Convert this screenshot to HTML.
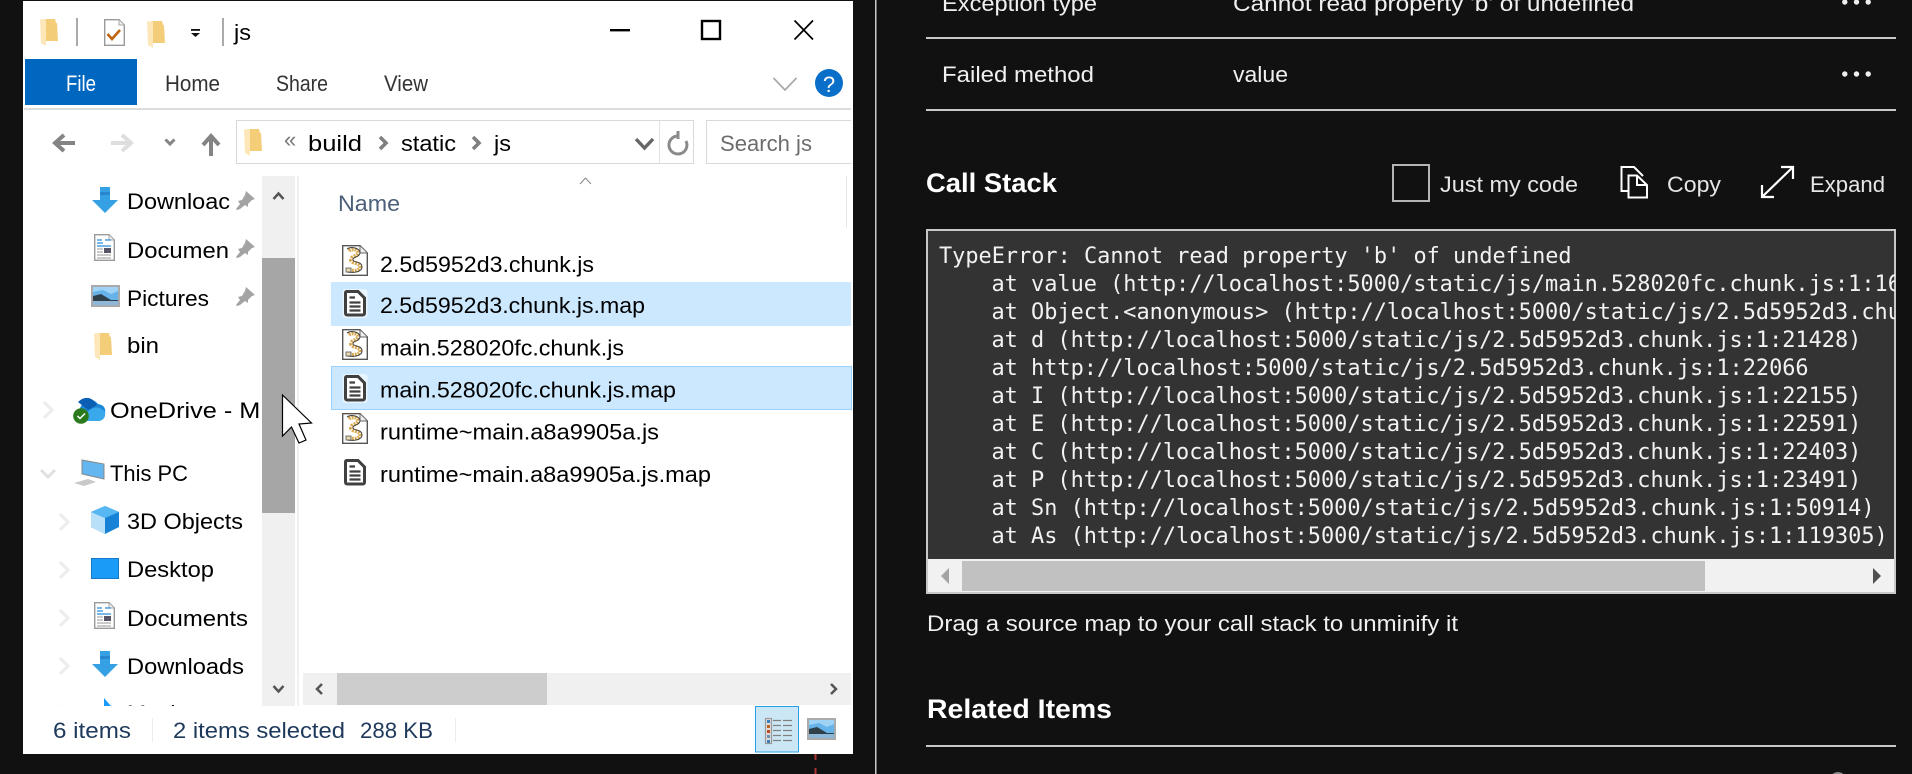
<!DOCTYPE html>
<html><head><meta charset="utf-8"><style>
html,body{margin:0;padding:0;background:#111;width:1912px;height:774px;overflow:hidden}
svg{display:block}
text{font-family:"Liberation Sans",sans-serif;font-size:22px}
.k{fill:#000}.w{fill:#f0f0f0}
.m{font-family:"DejaVu Sans Mono","Liberation Mono",monospace;font-size:21.9px;fill:#f2f2f2}
.b{font-weight:bold;font-size:27px;fill:#fff}
</style></head><body>
<svg width="1912" height="774" viewBox="0 0 1912 774" xmlns="http://www.w3.org/2000/svg">
<defs>
<g id="folder"><path d="M5 1H15L16 5H17L18 23H6Z" fill="#f4cd79"/><path d="M0 1.500L6 1V23L6 28L1 25Z" fill="#fde7b8"/></g>
<g id="doc"><path d="M.7.700H15L20.300 6V26.300H.7Z" fill="#fff" stroke="#9a9a9a" stroke-width="1.400"/><path d="M15 1V6H20" fill="#eee" stroke="#aaa"/><path d="M3 6H8M3 9H9M11 6H17M3 12H17" stroke="#2a8ad8" stroke-width="1.200"/><rect x="10" y="14" width="7" height="5" fill="#556"/><path d="M3 15H9M3 18H9M3 21H17M3 24H17" stroke="#aaa" stroke-width="1.200"/></g>
<g id="dl"><path d="M8 0H18V13H26L13 26L0 13H8Z" fill="#35a0e4"/><path d="M8 5H18V8H8Z" fill="#2a86cc"/></g>
<g id="pin"><path d="M11 1L20 9L17 10L13 14L13 17L10 15L5 19L2 20L1 19L5 14L3 11L7 10L10 5Z" fill="#a3a3a3"/></g>
<g id="js"><path d="M.7.700H18L25.300 8V30.300H.7Z" fill="#fff" stroke="#555" stroke-width="1.400"/><path d="M18 1V8H25" fill="#eee" stroke="#666"/><path d="M7 6C10 3 16 4 16 8C15 12 9 11 9 15C10 19 18 17 18 22C18 26 12 26 7 26" fill="none" stroke="#d8a850" stroke-width="4" stroke-dasharray="2 1"/><path d="M5 4C9 1 18 3 18 8C17 13 11 11 11 15C12 18 20 16 20 22C20 27 12 28 5 27" fill="none" stroke="#444" stroke-width="1"/><rect x="4" y="23" width="5" height="4" fill="#e8d9b0" stroke="#555" stroke-width=".8"/></g>
<g id="map"><rect x="-1.500" y="-1" width="25" height="29" rx="3" fill="#fff" opacity=".55"/><path d="M2 1.500H14L20.500 8V23C20.500 24.500 20 25 18.500 25H3.500C2 25 1.500 24.500 1.500 23V3C1.500 1.500 2 1.500 3 1.500Z" fill="#fff" stroke="#404040" stroke-width="3"/><path d="M5.500 7.500H11M5.500 12.500H16.500M5.500 16.500H16.500M5.500 20.500H16.500" stroke="#404040" stroke-width="2.200"/></g>
<g id="sun"><rect x="1" y="1" width="27" height="20" fill="#66b3ea" stroke="#aaa" stroke-width="2"/><path d="M2 7L12 5L20 9L27 6V2H2Z" fill="#9ed3f5"/><path d="M2 11L10 9L20 15H27V17H2Z" fill="#30404a"/><path d="M2 16H27V20H2Z" fill="#8fb8d8"/></g>
<g id="ell"><circle cx="2.800" cy="0" r="2.700" fill="#eee"/><circle cx="14.500" cy="0" r="2.700" fill="#eee"/><circle cx="26.200" cy="0" r="2.700" fill="#eee"/></g>
<clipPath id="codeclip"><rect x="928" y="231" width="967" height="328"/></clipPath>
<clipPath id="navclip"><rect x="23" y="176" width="239" height="530"/></clipPath>
</defs>

<rect width="1912" height="774" fill="#111"/>
<path d="M815.500 754V760M815.500 768V774" stroke="#a33" stroke-width="2"/>
<rect x="23" y="1" width="830" height="753" fill="#fff"/>

<!-- Title bar -->
<use href="#folder" x="40" y="18"/>
<rect x="76" y="18" width="2" height="28" fill="#aaa"/>
<path d="M104.700 19.700H119L124.300 25V45.300H104.700Z" fill="#fff" stroke="#9a9a9a" stroke-width="1.400"/>
<path d="M119 20V25H124" fill="#eee" stroke="#aaa"/>
<path d="M107.500 34L112 39L120 30" fill="none" stroke="#bf6510" stroke-width="2.600"/>
<use href="#folder" x="147" y="20"/>
<rect x="191" y="29" width="9" height="1.800" fill="#111"/><path d="M191 33H200L195.500 37Z" fill="#111"/>
<rect x="222" y="18" width="2" height="28" fill="#aaa"/>
<text x="234" y="40" textLength="17" lengthAdjust="spacingAndGlyphs" class="k" font-size="23">js</text>
<rect x="610" y="29" width="20" height="2.400" fill="#000"/>
<rect x="702" y="21" width="18" height="18" fill="none" stroke="#000" stroke-width="2.400"/>
<path d="M794.500 20.500L813 39.500M813 20.500L794.500 39.500" stroke="#000" stroke-width="1.700"/>

<!-- Ribbon -->
<rect x="25" y="59" width="112" height="46" fill="#0067c0"/>
<text x="66" y="91" textLength="30" lengthAdjust="spacingAndGlyphs" fill="#fff">File</text>
<text x="165" y="91" textLength="55" lengthAdjust="spacingAndGlyphs" fill="#333">Home</text>
<text x="276" y="91" textLength="52" lengthAdjust="spacingAndGlyphs" fill="#333">Share</text>
<text x="384" y="91" textLength="44" lengthAdjust="spacingAndGlyphs" fill="#333">View</text>
<path d="M773.500 78L785 90L796.500 78" fill="none" stroke="#aaa" stroke-width="1.800"/>
<circle cx="829" cy="83" r="14" fill="#0a6fc9"/>
<text x="829" y="92" text-anchor="middle" fill="#fff" font-size="24">?</text>
<rect x="24" y="108" width="827" height="2" fill="#dcdcdc"/>

<!-- Nav bar -->
<path d="M75 143H56M64 135L55 143L64 151" fill="none" stroke="#848484" stroke-width="4"/>
<path d="M111 143H130M122 135L131 143L122 151" fill="none" stroke="#dedede" stroke-width="4"/>
<path d="M165.500 139.500L170 144L174.500 139.500" fill="none" stroke="#848484" stroke-width="3"/>
<path d="M211 156V137M203 145L211 136L219 145" fill="none" stroke="#848484" stroke-width="4"/>
<rect x="236.500" y="120.500" width="457" height="43" fill="#fff" stroke="#d9d9d9"/>
<use href="#folder" x="244" y="128"/>
<text x="284" y="147" fill="#777" font-size="15">«</text>
<text x="308" y="151" textLength="54" lengthAdjust="spacingAndGlyphs" class="k">build</text>
<path d="M380 137L386 143L380 149" fill="none" stroke="#808080" stroke-width="3.600"/>
<text x="401" y="151" textLength="55" lengthAdjust="spacingAndGlyphs" class="k">static</text>
<path d="M473 137L479 143L473 149" fill="none" stroke="#808080" stroke-width="3.600"/>
<text x="494" y="151" textLength="17" lengthAdjust="spacingAndGlyphs" class="k">js</text>
<path d="M636 139L644.500 148L653 139" fill="none" stroke="#666" stroke-width="3.400"/>
<rect x="659" y="121" width="1" height="42" fill="#e2e2e2"/>
<path d="M678 136A9 9 0 1 0 686 141M678 131V139" fill="none" stroke="#8a8a8a" stroke-width="3"/>
<path d="M851 120.500H706.500V163.500H851" fill="#fff" stroke="#d9d9d9"/>
<text x="720" y="151" textLength="92" lengthAdjust="spacingAndGlyphs" fill="#6d6d6d">Search js</text>

<!-- Left nav -->
<g clip-path="url(#navclip)">
<use href="#dl" x="92" y="187"/>
<text x="127" y="209" textLength="103" lengthAdjust="spacingAndGlyphs" class="k">Downloac</text>
<use href="#pin" x="235" y="190"/>
<use href="#doc" x="94" y="234"/>
<text x="127" y="258" textLength="102" lengthAdjust="spacingAndGlyphs" class="k">Documen</text>
<use href="#pin" x="235" y="238"/>
<use href="#sun" x="91" y="285"/>
<text x="127" y="306" textLength="82" lengthAdjust="spacingAndGlyphs" class="k">Pictures</text>
<use href="#pin" x="235" y="286"/>
<use href="#folder" x="94" y="332"/>
<text x="127" y="353" textLength="32" lengthAdjust="spacingAndGlyphs" class="k">bin</text>
<path d="M44 402L52 410L44 418" fill="none" stroke="#ececec" stroke-width="3"/>
<path d="M79 413C79 404 90 394 98 404C104 405 106 408 105 414C105 420 100 421 97 421H82Z" fill="#1e88d8"/>
<path d="M78 402C84 396 92 396 97 405L88 410Z" fill="#0a5eb4"/>
<path d="M84 416C90 408 98 404 105 412C106 418 102 421 98 421H84Z" fill="#3aa9ec"/>
<circle cx="81" cy="416" r="7.800" fill="#2b7a1d"/>
<path d="M77.500 416L80 418.500L85 413.500" fill="none" stroke="#fff" stroke-width="1.500"/>
<text x="110" y="418" textLength="156" lengthAdjust="spacingAndGlyphs" class="k">OneDrive - Mi</text>
<path d="M41 470L48 477L55 470" fill="none" stroke="#e0e0e0" stroke-width="3"/>
<path d="M82 460L104 464V479L82 474Z" fill="#63b6ef" stroke="#888" stroke-width="1"/>
<path d="M74 483L88 479L96 482L84 486Z" fill="#c8c8c8"/>
<text x="110" y="481" textLength="78" lengthAdjust="spacingAndGlyphs" class="k">This PC</text>
<path d="M60 514L68 522L60 530" fill="none" stroke="#ececec" stroke-width="3"/>
<path d="M105 506L119 512V527L105 534L91 527V512Z" fill="#1782d6"/>
<path d="M91 512L105 506L119 512L105 518Z" fill="#57b7f2"/>
<path d="M91 512L105 518V534L91 527Z" fill="#b8e0f8"/>
<text x="127" y="529" textLength="116" lengthAdjust="spacingAndGlyphs" class="k">3D Objects</text>
<path d="M60 562L68 570L60 578" fill="none" stroke="#ececec" stroke-width="3"/>
<rect x="91.500" y="558.500" width="27" height="20" fill="#1a9bf5" stroke="#1477c8"/>
<text x="127" y="577" textLength="87" lengthAdjust="spacingAndGlyphs" class="k">Desktop</text>
<path d="M60 610L68 618L60 626" fill="none" stroke="#ececec" stroke-width="3"/>
<use href="#doc" x="94" y="602"/>
<text x="127" y="626" textLength="121" lengthAdjust="spacingAndGlyphs" class="k">Documents</text>
<path d="M60 658L68 666L60 674" fill="none" stroke="#ececec" stroke-width="3"/>
<use href="#dl" x="92" y="651"/>
<text x="127" y="674" textLength="117" lengthAdjust="spacingAndGlyphs" class="k">Downloads</text>
<path d="M60 706L68 714" fill="none" stroke="#ececec" stroke-width="3"/>
<path d="M104 698L111 706H104Z" fill="#1a9bf5"/>
<text x="127" y="721" textLength="60" lengthAdjust="spacingAndGlyphs" class="k">Music</text>
</g>

<!-- Nav scrollbar -->
<rect x="262" y="176" width="33" height="530" fill="#f0f0f0"/>
<rect x="262" y="258" width="33" height="255" fill="#a6a6a6"/>
<rect x="297" y="176" width="2" height="530" fill="#f0f0f0"/>
<path d="M273.500 199L278.500 193.500L283.500 199" fill="none" stroke="#555" stroke-width="2.500"/>
<path d="M273.500 686L278.500 691.500L283.500 686" fill="none" stroke="#555" stroke-width="2.500"/>

<!-- File list -->
<path d="M580 184L585.500 178L591 184" fill="none" stroke="#888" stroke-width="1"/>
<rect x="846" y="176" width="1" height="52" fill="#e8e8e8"/>
<text x="338" y="211" textLength="62" lengthAdjust="spacingAndGlyphs" fill="#4c607a">Name</text>
<rect x="331" y="282" width="520" height="44" fill="#cce8ff"/>
<rect x="331.500" y="366.500" width="520" height="43" fill="#cce8ff" stroke="#99d1ff"/>
<use href="#js" x="342" y="245"/>
<use href="#map" x="344" y="290"/>
<use href="#js" x="342" y="329"/>
<use href="#map" x="344" y="375"/>
<use href="#js" x="342" y="413"/>
<use href="#map" x="344" y="459"/>
<text x="380" y="272" textLength="214" lengthAdjust="spacingAndGlyphs" class="k">2.5d5952d3.chunk.js</text>
<text x="380" y="313" textLength="265" lengthAdjust="spacingAndGlyphs" class="k">2.5d5952d3.chunk.js.map</text>
<text x="380" y="355.500" textLength="244" lengthAdjust="spacingAndGlyphs" class="k">main.528020fc.chunk.js</text>
<text x="380" y="397.500" textLength="296" lengthAdjust="spacingAndGlyphs" class="k">main.528020fc.chunk.js.map</text>
<text x="380" y="439.500" textLength="279" lengthAdjust="spacingAndGlyphs" class="k">runtime~main.a8a9905a.js</text>
<text x="380" y="482" textLength="331" lengthAdjust="spacingAndGlyphs" class="k">runtime~main.a8a9905a.js.map</text>

<!-- H scrollbar -->
<rect x="303" y="673" width="548" height="32" fill="#f0f0f0"/>
<rect x="337" y="673" width="210" height="32" fill="#cdcdcd"/>
<path d="M322 684L317 689L322 694" fill="none" stroke="#555" stroke-width="2.500"/>
<path d="M831 684L836 689L831 694" fill="none" stroke="#555" stroke-width="2.500"/>

<!-- Status bar -->
<text x="53" y="738" textLength="78" lengthAdjust="spacingAndGlyphs" fill="#1e395b">6 items</text>
<rect x="152" y="718" width="1" height="24" fill="#ececec"/>
<text x="173" y="738" textLength="172" lengthAdjust="spacingAndGlyphs" fill="#1e395b">2 items selected</text>
<text x="360" y="738" textLength="73" lengthAdjust="spacingAndGlyphs" fill="#1e395b">288 KB</text>
<rect x="455" y="718" width="1" height="24" fill="#ececec"/>
<rect x="755.500" y="706.500" width="43" height="45.500" fill="#cbe6f5" stroke="#26a0ea"/>
<rect x="765.500" y="718.500" width="6" height="25" fill="#ddd" stroke="#999" stroke-width="1.200"/>
<rect x="767" y="720" width="3" height="3" fill="#3a7fc0"/><rect x="767" y="725" width="3" height="3" fill="#b5651d"/><rect x="767" y="730" width="3" height="3" fill="#c0481d"/><rect x="767" y="735" width="3" height="3" fill="#6a8fb0"/><rect x="767" y="740" width="3" height="3" fill="#3a7fc0"/>
<path d="M773 720.500H781M783 720.500H792M773 725.500H781M783 725.500H792M773 730.500H781M783 730.500H792M773 735.500H781M783 735.500H792M773 740.500H781M783 740.500H792" stroke="#808080" stroke-width="1.200"/>
<use href="#sun" x="807" y="718"/>

<!-- Cursor -->
<path d="M282.500 395V436L291.500 427L299 443L306 440L299 424L311.500 423Z" fill="#fff" stroke="#000" stroke-width="1.200"/>

<!-- Right panel -->
<rect x="875" y="0" width="1.500" height="774" fill="#c8c8c8"/>
<text x="942" y="11" textLength="155" lengthAdjust="spacingAndGlyphs" class="w">Exception type</text>
<text x="1233" y="11" textLength="401" lengthAdjust="spacingAndGlyphs" class="w">Cannot read property 'b' of undefined</text>
<use href="#ell" x="1842" y="2"/>
<rect x="926" y="37" width="970" height="2" fill="#c8c8c8"/>
<text x="942" y="82" textLength="152" lengthAdjust="spacingAndGlyphs" class="w">Failed method</text>
<text x="1233" y="82" textLength="55" lengthAdjust="spacingAndGlyphs" class="w">value</text>
<use href="#ell" x="1842" y="74"/>
<rect x="926" y="109" width="970" height="2" fill="#c8c8c8"/>

<text x="926" y="192" textLength="131" lengthAdjust="spacingAndGlyphs" class="b">Call Stack</text>
<rect x="1393" y="165" width="36" height="36" fill="none" stroke="#b5b5b5" stroke-width="2"/>
<text x="1440" y="192" textLength="138" lengthAdjust="spacingAndGlyphs" fill="#e6e6e6">Just my code</text>
<path d="M1628 191H1621.500V167H1634L1643 176M1628.500 175.500H1637L1647 185V197.500H1628.500Z M1637 175.500V185H1647" fill="none" stroke="#fff" stroke-width="2"/>
<text x="1667" y="192" textLength="54" lengthAdjust="spacingAndGlyphs" fill="#e6e6e6">Copy</text>
<path d="M1763 196L1792 168M1781 167H1793V179M1762 185V197H1774" fill="none" stroke="#fff" stroke-width="2.200"/>
<text x="1810" y="192" textLength="75" lengthAdjust="spacingAndGlyphs" fill="#e6e6e6">Expand</text>

<!-- Code box -->
<rect x="926" y="229" width="970" height="365" fill="#c8c8c8"/>
<rect x="928" y="231" width="966" height="328" fill="#333"/>
<g clip-path="url(#codeclip)">
<text x="939" y="263" class="m">TypeError: Cannot read property 'b' of undefined</text>
<text x="991.500" y="291" class="m">at value (http://localhost:5000/static/js/main.528020fc.chunk.js:1:16083)</text>
<text x="991.500" y="319" class="m">at Object.&lt;anonymous&gt; (http://localhost:5000/static/js/2.5d5952d3.chunk.js:1:21428)</text>
<text x="991.500" y="347" class="m">at d (http://localhost:5000/static/js/2.5d5952d3.chunk.js:1:21428)</text>
<text x="991.500" y="375" class="m">at http://localhost:5000/static/js/2.5d5952d3.chunk.js:1:22066</text>
<text x="991.500" y="403" class="m">at I (http://localhost:5000/static/js/2.5d5952d3.chunk.js:1:22155)</text>
<text x="991.500" y="431" class="m">at E (http://localhost:5000/static/js/2.5d5952d3.chunk.js:1:22591)</text>
<text x="991.500" y="459" class="m">at C (http://localhost:5000/static/js/2.5d5952d3.chunk.js:1:22403)</text>
<text x="991.500" y="487" class="m">at P (http://localhost:5000/static/js/2.5d5952d3.chunk.js:1:23491)</text>
<text x="991.500" y="515" class="m">at Sn (http://localhost:5000/static/js/2.5d5952d3.chunk.js:1:50914)</text>
<text x="991.500" y="543" class="m">at As (http://localhost:5000/static/js/2.5d5952d3.chunk.js:1:119305)</text>
</g>
<rect x="928" y="559" width="966" height="33" fill="#f1f1f1"/>
<rect x="962" y="561" width="743" height="30" fill="#c1c1c1"/>
<path d="M949 568V584L941 576Z" fill="#a3a3a3"/>
<path d="M1873 568V584L1881 576Z" fill="#505050"/>

<text x="927" y="631" textLength="531" lengthAdjust="spacingAndGlyphs" fill="#f0f0f0">Drag a source map to your call stack to unminify it</text>
<text x="927" y="718" textLength="185" lengthAdjust="spacingAndGlyphs" class="b">Related Items</text>
<rect x="926" y="745" width="970" height="2" fill="#c8c8c8"/>
<circle cx="1838" cy="780" r="8" fill="#8a8a8a"/>
</svg>
</body></html>
